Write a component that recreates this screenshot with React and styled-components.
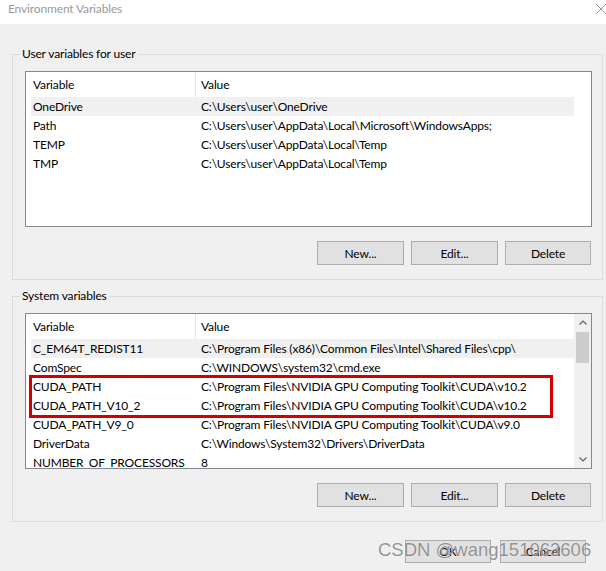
import React from 'react'
import styled, { createGlobalStyle } from 'styled-components'

const GlobalStyle = createGlobalStyle`
  html, body {
    margin: 0;
    padding: 0;
    background: #f0f0f0;
  }
  body {
    font-family: Lato, "Liberation Sans", Arial, sans-serif;
    font-size: 12px;
    letter-spacing: -0.15px;
    color: #000;
  }
`

const Window = styled.div`
  position: relative;
  width: 606px;
  height: 571px;
  overflow: hidden;
  background: #f0f0f0;
`
const TitleBar = styled.div`
  height: 24px;
  background: #fff;
  display: flex;
  justify-content: space-between;
  align-items: flex-start;
  padding: 1px 0 0 8px;
  box-sizing: border-box;
`
const Title = styled.span`
  line-height: 16px;
  color: #9a9a9a;
`
const Body = styled.div`
  padding: 22px 3px 0 12px;
`
const Group = styled.fieldset`
  margin: ${({ first }) => (first ? '0' : '8px 0 0 0')};
  padding: 9px 10px 14px 12px;
  border: 1px solid #dcdcdc;
  min-width: 0;
`
const Legend = styled.legend`
  margin-left: -5px;
  padding: 0 2px;
  line-height: 16px;
  color: #000;
`
const ListView = styled.div`
  position: relative;
  height: 156px;
  box-sizing: border-box;
  border: 1px solid #828790;
  background: #fff;
  display: flex;
  overflow: hidden;
`
const Rows = styled.div`
  flex: 1;
  padding-left: 5px;
  overflow: hidden;
`
const Header = styled.div`
  display: flex;
  height: 25px;
  align-items: stretch;
`
const HeadCell = styled.div`
  display: flex;
  align-items: center;
  box-sizing: border-box;
  ${({ first }) =>
    first
      ? `width: 165px; padding-left: 2px; border-right: 1px solid #e5e5e5;`
      : `flex: 1; padding-left: 5px;`}
`
const Row = styled.div`
  display: flex;
  height: 19px;
  align-items: center;
  background: ${({ selected }) => (selected ? '#f0f0f0' : 'transparent')};
  white-space: nowrap;
`
const Cell = styled.div`
  box-sizing: border-box;
  overflow: hidden;
  ${({ first }) =>
    first ? `width: 165px; padding-left: 2px;` : `flex: 1; padding-left: 5px;`}
`
const ScrollSpace = styled.div`
  width: 17px;
  flex-shrink: 0;
  background: ${({ active }) => (active ? '#f0f0f0' : '#fff')};
  display: flex;
  flex-direction: column;
`
const ScrollArrow = styled.div`
  height: 17px;
  display: flex;
  align-items: center;
  justify-content: center;
`
const ScrollTrack = styled.div`
  flex: 1;
  padding: 1px 2px;
`
const ScrollThumb = styled.div`
  height: 31px;
  background: #cdcdcd;
`
const Highlight = styled.div`
  position: absolute;
  left: 3px;
  top: 61px;
  width: 524px;
  height: 43px;
  box-sizing: border-box;
  border: 3px solid #d40000;
  pointer-events: none;
`
const ButtonRow = styled.div`
  display: flex;
  justify-content: flex-end;
  gap: 7px;
  margin-top: 14px;
  padding-right: ${({ pad }) => pad || 1}px;
`
const Button = styled.button`
  width: ${({ w }) => w || 87}px;
  height: ${({ h }) => h || 24}px;
  padding: 0;
  background: #e1e1e1;
  border: 1px solid #adadad;
  font-family: inherit;
  font-size: inherit;
  letter-spacing: inherit;
  color: #000;
`
const DialogButtons = styled(ButtonRow)`
  gap: 9px;
  margin-top: 18px;
`
const Watermark = styled.div`
  position: absolute;
  left: 378px;
  top: 538px;
  font-family: "Liberation Sans", Arial, sans-serif;
  font-size: 18.5px;
  letter-spacing: 0;
  line-height: 24px;
  color: rgba(100, 100, 100, 0.7);
  text-shadow: 0 0 1px rgba(255, 255, 255, 0.9);
  white-space: nowrap;
  pointer-events: none;
`

const userVars = [
  ['OneDrive', 'C:\\Users\\user\\OneDrive'],
  ['Path', 'C:\\Users\\user\\AppData\\Local\\Microsoft\\WindowsApps;'],
  ['TEMP', 'C:\\Users\\user\\AppData\\Local\\Temp'],
  ['TMP', 'C:\\Users\\user\\AppData\\Local\\Temp'],
]

const systemVars = [
  ['C_EM64T_REDIST11', 'C:\\Program Files (x86)\\Common Files\\Intel\\Shared Files\\cpp\\'],
  ['ComSpec', 'C:\\WINDOWS\\system32\\cmd.exe'],
  ['CUDA_PATH', 'C:\\Program Files\\NVIDIA GPU Computing Toolkit\\CUDA\\v10.2'],
  ['CUDA_PATH_V10_2', 'C:\\Program Files\\NVIDIA GPU Computing Toolkit\\CUDA\\v10.2'],
  ['CUDA_PATH_V9_0', 'C:\\Program Files\\NVIDIA GPU Computing Toolkit\\CUDA\\v9.0'],
  ['DriverData', 'C:\\Windows\\System32\\Drivers\\DriverData'],
  ['NUMBER_OF_PROCESSORS', '8'],
]

const Chevron = ({ up }) => (
  <svg width="8" height="5" viewBox="0 0 8 5">
    <path
      d={up ? 'M0.5 4.5 L4 1 L7.5 4.5' : 'M0.5 0.5 L4 4 L7.5 0.5'}
      fill="none"
      stroke="#606060"
      strokeWidth="1.2"
    />
  </svg>
)

const VarList = ({ items, scroll, children }) => (
  <ListView>
    <Rows>
      <Header>
        <HeadCell first>Variable</HeadCell>
        <HeadCell>Value</HeadCell>
      </Header>
      {items.map(([name, value], i) => (
        <Row key={name} selected={i === 0}>
          <Cell first>{name}</Cell>
          <Cell>{value}</Cell>
        </Row>
      ))}
    </Rows>
    <ScrollSpace active={scroll}>
      {scroll && (
        <>
          <ScrollArrow><Chevron up /></ScrollArrow>
          <ScrollTrack><ScrollThumb /></ScrollTrack>
          <ScrollArrow><Chevron /></ScrollArrow>
        </>
      )}
    </ScrollSpace>
    {children}
  </ListView>
)

const App = () => {
  return (
    <Window>
      <GlobalStyle />
      <TitleBar>
        <Title>Environment Variables</Title>
        <svg width="10" height="10" viewBox="0 0 10 10" style={{ marginTop: 3 }}>
          <path d="M0 0 L10 10 M10 0 L0 10" stroke="#9a9a9a" strokeWidth="1" />
        </svg>
      </TitleBar>
      <Body>
        <Group first>
          <Legend>User variables for user</Legend>
          <VarList items={userVars} />
          <ButtonRow>
            <Button>New...</Button>
            <Button>Edit...</Button>
            <Button w={86}>Delete</Button>
          </ButtonRow>
        </Group>
        <Group>
          <Legend>System variables</Legend>
          <VarList items={systemVars} scroll>
            <Highlight />
          </VarList>
          <ButtonRow>
            <Button>New...</Button>
            <Button>Edit...</Button>
            <Button w={86}>Delete</Button>
          </ButtonRow>
        </Group>
        <DialogButtons pad={17}>
          <Button w={86} h={23}>OK</Button>
          <Button w={86} h={23}>Cancel</Button>
        </DialogButtons>
      </Body>
      <Watermark>CSDN @wang151063606</Watermark>
    </Window>
  )
}

export default App
